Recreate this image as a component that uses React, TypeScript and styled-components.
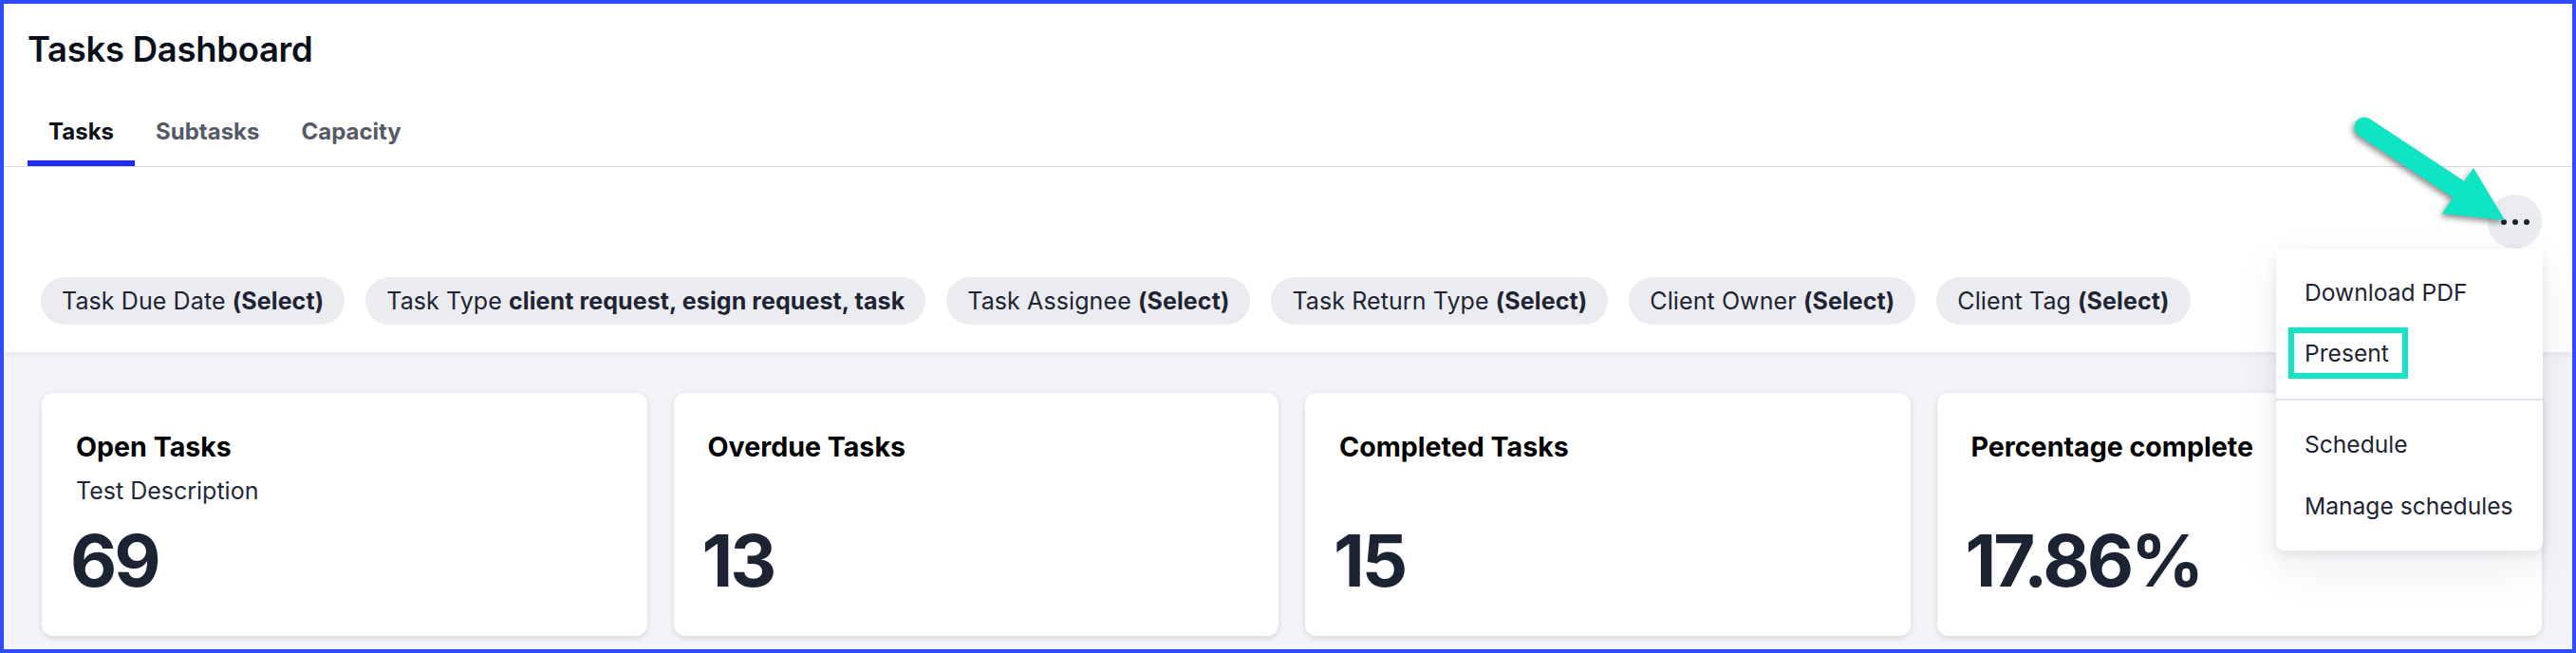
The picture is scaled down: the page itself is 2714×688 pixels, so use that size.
import React from "react";
import styled, { createGlobalStyle } from "styled-components";

const GlobalStyle = createGlobalStyle`
  html, body { margin: 0; padding: 0; background: #ffffff; }
  body { font-family: Inter, "Noto Sans", "Liberation Sans", sans-serif; }
  * { box-sizing: border-box; }
`;

const Frame = styled.div`
  position: relative;
  width: 2714px;
  height: 688px;
  border: 4px solid #2f4bff;
  background: #f3f4f7;
  display: flex;
  flex-direction: column;
  overflow: hidden;
`;

const Header = styled.header`
  background: #ffffff;
  padding: 26px 0 0 25px;
  border-bottom: 1px solid #dcdcdc;
`;

const Title = styled.h1`
  margin: 0;
  font-size: 36.5px;
  line-height: 45px;
  font-weight: 600;
  color: #0b0f19;
  letter-spacing: -0.3px;
`;

const TabList = styled.nav`
  display: flex;
  margin-top: 37px;
`;

const Tab = styled.div<{ $active?: boolean }>`
  padding: 12px 22px 16px;
  font-size: 24px;
  line-height: 29px;
  font-weight: 700;
  color: ${(p) => (p.$active ? "#0b0f19" : "#545a66")};
  border-bottom: 6px solid ${(p) => (p.$active ? "#1f2bff" : "transparent")};
`;

const FilterSection = styled.section`
  position: relative;
  z-index: 2;
  background: #ffffff;
  padding: 29px 32px 29px 39px;
  box-shadow: 0 3px 6px rgba(20, 30, 60, 0.06);
  display: flex;
  flex-direction: column;
  gap: 30px;
`;

const Toolbar = styled.div`
  display: flex;
  justify-content: flex-end;
`;

const MenuAnchor = styled.div`
  position: relative;
`;

const KebabButton = styled.button`
  width: 57px;
  height: 57px;
  border-radius: 50%;
  border: none;
  background: #ebecf0;
  display: flex;
  align-items: center;
  justify-content: center;
  gap: 6px;
  padding: 0;
`;

const Dot = styled.span`
  width: 6px;
  height: 6px;
  border-radius: 50%;
  background: #1e2433;
`;

const Menu = styled.div`
  position: absolute;
  top: 100%;
  right: -1px;
  width: 281px;
  background: #ffffff;
  border-radius: 8px;
  box-shadow: 0 4px 12px rgba(20, 30, 60, 0.08), 0 18px 48px rgba(20, 30, 60, 0.08);
  z-index: 5;
`;

const MenuGroup = styled.div<{ $divided?: boolean }>`
  padding: 14px 0;
  border-top: ${(p) => (p.$divided ? "2px solid #dfe2ea" : "none")};
`;

const MenuItem = styled.div`
  height: 65px;
  display: flex;
  align-items: center;
  padding: 0 30px;
  font-size: 24.6px;
  line-height: 29px;
  color: #1e2433;
  white-space: nowrap;
`;

const Highlight = styled.span`
  display: inline-block;
  border: 6px solid #12e4c5;
  padding: 7px 14px 6px 11px;
  margin-left: -17px;
  margin-top: -3px;
`;

const ChipRow = styled.div`
  display: flex;
  gap: 22px;
`;

const Chip = styled.div`
  height: 50px;
  padding: 0 22px;
  border-radius: 25px;
  background: #ebecf0;
  display: flex;
  align-items: center;
  font-size: 25px;
  letter-spacing: 0.1px;
  color: #1e2433;
  white-space: nowrap;
  b { font-weight: 700; }
`;

const CardGrid = styled.main`
  display: grid;
  grid-template-columns: repeat(4, 1fr);
  gap: 28px;
  padding: 43px 32px 0 40px;
`;

const Card = styled.div`
  height: 256px;
  background: #ffffff;
  border-radius: 12px;
  box-shadow: 0 2px 6px rgba(20, 30, 60, 0.14);
  padding: 40px 36px 34px;
  display: flex;
  flex-direction: column;
`;

const CardTitle = styled.div`
  font-size: 28.6px;
  line-height: 34px;
  font-weight: 700;
  color: #000000;
`;

const CardDesc = styled.div`
  margin-top: 14px;
  font-size: 25px;
  line-height: 30px;
  color: #1f2937;
`;

const CardValue = styled.div`
  margin-top: auto;
  margin-left: -6px;
  font-size: 76px;
  line-height: 91px;
  font-weight: 700;
  color: #1c2333;
  letter-spacing: -3px;
`;

const ArrowOverlay = styled.svg`
  position: absolute;
  left: 2456px;
  top: 101px;
  z-index: 10;
  overflow: visible;
  filter: drop-shadow(-2px 3px 3px rgba(0, 0, 0, 0.45));
`;

const filters: { label: string; value: string }[] = [
  { label: "Task Due Date", value: "(Select)" },
  { label: "Task Type", value: "client request, esign request, task" },
  { label: "Task Assignee", value: "(Select)" },
  { label: "Task Return Type", value: "(Select)" },
  { label: "Client Owner", value: "(Select)" },
  { label: "Client Tag", value: "(Select)" },
];

const cards: { title: string; desc?: string; value: string }[] = [
  { title: "Open Tasks", desc: "Test Description", value: "69" },
  { title: "Overdue Tasks", value: "13" },
  { title: "Completed Tasks", value: "15" },
  { title: "Percentage complete", value: "17.86%" },
];

export default function App() {
  return (
    <>
      <GlobalStyle />
      <Frame>
        <Header>
          <Title>Tasks Dashboard</Title>
          <TabList>
            <Tab $active>Tasks</Tab>
            <Tab>Subtasks</Tab>
            <Tab>Capacity</Tab>
          </TabList>
        </Header>
        <FilterSection>
          <Toolbar>
            <MenuAnchor>
              <KebabButton aria-label="More">
                <Dot />
                <Dot />
                <Dot />
              </KebabButton>
              <Menu>
                <MenuGroup>
                  <MenuItem>Download PDF</MenuItem>
                  <MenuItem>
                    <Highlight>Present</Highlight>
                  </MenuItem>
                </MenuGroup>
                <MenuGroup $divided>
                  <MenuItem>Schedule</MenuItem>
                  <MenuItem>Manage schedules</MenuItem>
                </MenuGroup>
              </Menu>
            </MenuAnchor>
          </Toolbar>
          <ChipRow>
            {filters.map((f) => (
              <Chip key={f.label}>
                {f.label}&nbsp;<b>{f.value}</b>
              </Chip>
            ))}
          </ChipRow>
        </FilterSection>
        <CardGrid>
          {cards.map((c) => (
            <Card key={c.title}>
              <CardTitle>{c.title}</CardTitle>
              {c.desc && <CardDesc>{c.desc}</CardDesc>}
              <CardValue>{c.value}</CardValue>
            </Card>
          ))}
        </CardGrid>
        <ArrowOverlay width="190" height="140" viewBox="0 0 190 140">
          <line x1="31" y1="29" x2="128" y2="93" stroke="#0ee5c4" strokeWidth="21" strokeLinecap="round" />
          <polygon points="146,72 179,127 113,120" fill="#0ee5c4" />
        </ArrowOverlay>
      </Frame>
    </>
  );
}
